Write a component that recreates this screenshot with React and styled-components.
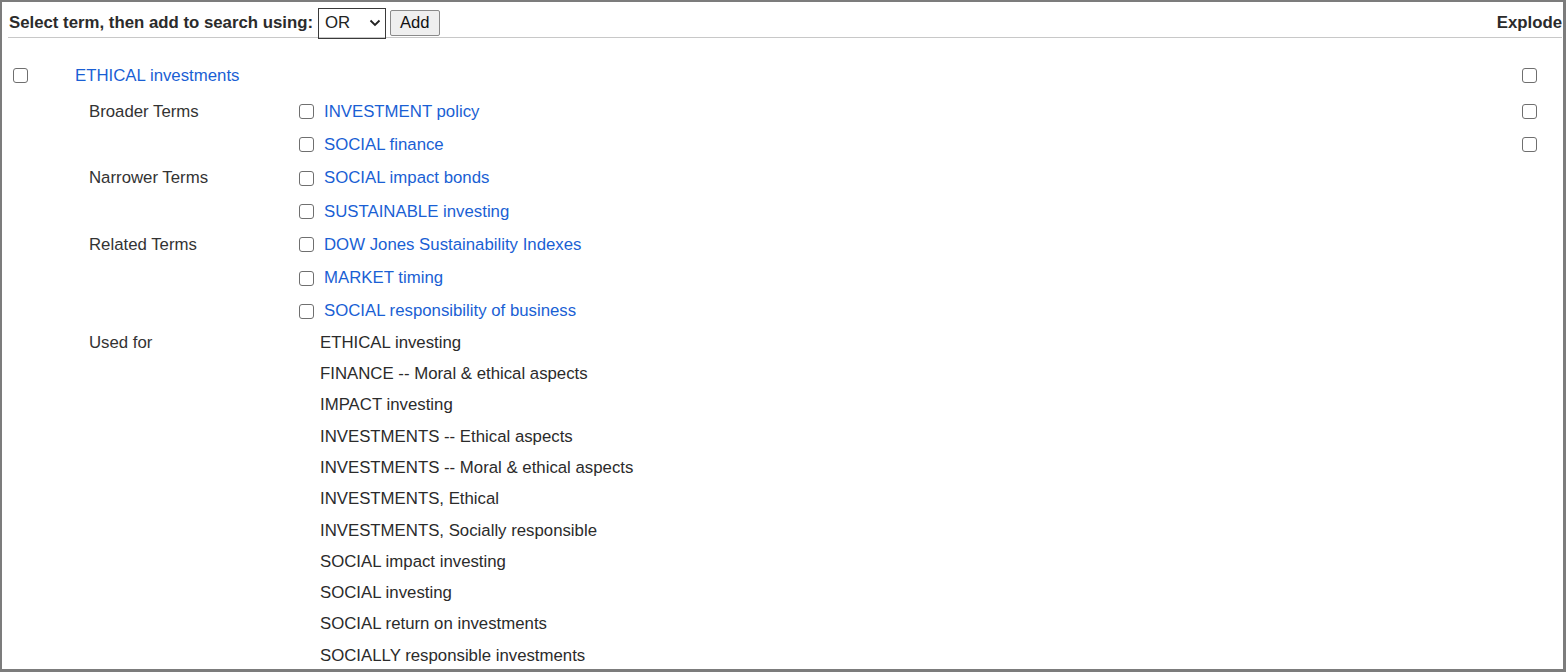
import React from 'react'
import styled, { createGlobalStyle } from 'styled-components'

const Global = createGlobalStyle`
    html, body { margin:0; padding:0; background:#fff; }
    body { font-family:"Liberation Sans", Arial, sans-serif; color:#333; }
`

const Frame = styled.div`
    width:1566px;
    height:672px;
    box-sizing:border-box;
    border:2px solid #7c7c7c;
    border-right-width:3px;
    border-bottom-width:3px;
    overflow:hidden;
    padding:0 1px 0 6px;
`

const Toolbar = styled.div`
    display:flex;
    align-items:center;
    box-sizing:border-box;
    height:36px;
    padding:7px 0 0 1px;
    border-bottom:1px solid #c8c8c8;
    font-size:16.8px;
    font-weight:bold;
    color:#2b2b2b;
`

const Label = styled.span`
    margin-right:5px;
`

const Select = styled.div`
    display:flex;
    align-items:center;
    justify-content:space-between;
    box-sizing:border-box;
    width:68px;
    height:31px;
    border:1px solid #3a3a3a;
    padding:0 4px 0 6px;
    font-weight:normal;
    color:#222;
`

const Button = styled.button`
    height:26px;
    margin:0 0 0 4px;
    padding:0 9px;
    font-family:inherit;
    font-size:16.6px;
    color:#111;
    background:#efefef;
    border:1px solid #8a8a8a;
    border-radius:2px;
`

const Spacer = styled.div`
    flex:1;
`

const Box = styled.span`
    display:inline-block;
    box-sizing:border-box;
    width:15px;
    height:15px;
    border:1.3px solid #6f6f6f;
    border-radius:3px;
    background:#fff;
    flex:none;
`

const Body = styled.div`
    padding-top:18px;
    font-size:16.8px;
    margin-left:-2px;
`

const MainRow = styled.div`
    display:flex;
    align-items:center;
    height:39px;
    padding:0 25px 0 7px;
`

const Link = styled.a`
    color:#1a5fd4;
    text-decoration:none;
    margin-left:${p => p.$gap || 10}px;
`

const Row = styled.div`
    display:grid;
    grid-template-columns:210px 1fr 15px;
    align-items:center;
    height:${p => p.$h}px;
    padding:0 25px 0 83px;
`

const UsedList = styled.div`
    margin-top:-1px;
`

const Term = styled.div`
    display:flex;
    align-items:center;
`

const Plain = styled.div`
    padding-left:21px;
    color:#2b2b2b;
`

const Chevron = () => (
    <svg width="12" height="8" viewBox="0 0 12 8">
        <path d="M1.5 1.5 L6 6 L10.5 1.5" fill="none" stroke="#222" strokeWidth="1.8" />
    </svg>
)

const sections = [
    { label: 'Broader Terms', terms: ['INVESTMENT policy', 'SOCIAL finance'], explode: true },
    { label: 'Narrower Terms', terms: ['SOCIAL impact bonds', 'SUSTAINABLE investing'] },
    { label: 'Related Terms', terms: ['DOW Jones Sustainability Indexes', 'MARKET timing', 'SOCIAL responsibility of business'] },
]

const usedFor = [
    'ETHICAL investing',
    'FINANCE -- Moral & ethical aspects',
    'IMPACT investing',
    'INVESTMENTS -- Ethical aspects',
    'INVESTMENTS -- Moral & ethical aspects',
    'INVESTMENTS, Ethical',
    'INVESTMENTS, Socially responsible',
    'SOCIAL impact investing',
    'SOCIAL investing',
    'SOCIAL return on investments',
    'SOCIALLY responsible investments',
]

const App = () => (
    <>
        <Global />
        <Frame>
            <Toolbar>
                <Label>Select term, then add to search using:</Label>
                <Select>OR <Chevron /></Select>
                <Button>Add</Button>
                <Spacer />
                <span>Explode</span>
            </Toolbar>
            <Body>
                <MainRow>
                    <Box />
                    <Link href="#" $gap={47}>ETHICAL investments</Link>
                    <Spacer />
                    <Box />
                </MainRow>
                {sections.map(s => s.terms.map((t, i) => (
                    <Row key={t} $h={33.3}>
                        <span>{i === 0 ? s.label : ''}</span>
                        <Term><Box /><Link href="#">{t}</Link></Term>
                        {s.explode ? <Box /> : <span />}
                    </Row>
                )))}
                <UsedList>
                    {usedFor.map((u, i) => (
                        <Row key={u} $h={31.3}>
                            <span>{i === 0 ? 'Used for' : ''}</span>
                            <Plain>{u}</Plain>
                            <span />
                        </Row>
                    ))}
                </UsedList>
            </Body>
        </Frame>
    </>
)

export default App
